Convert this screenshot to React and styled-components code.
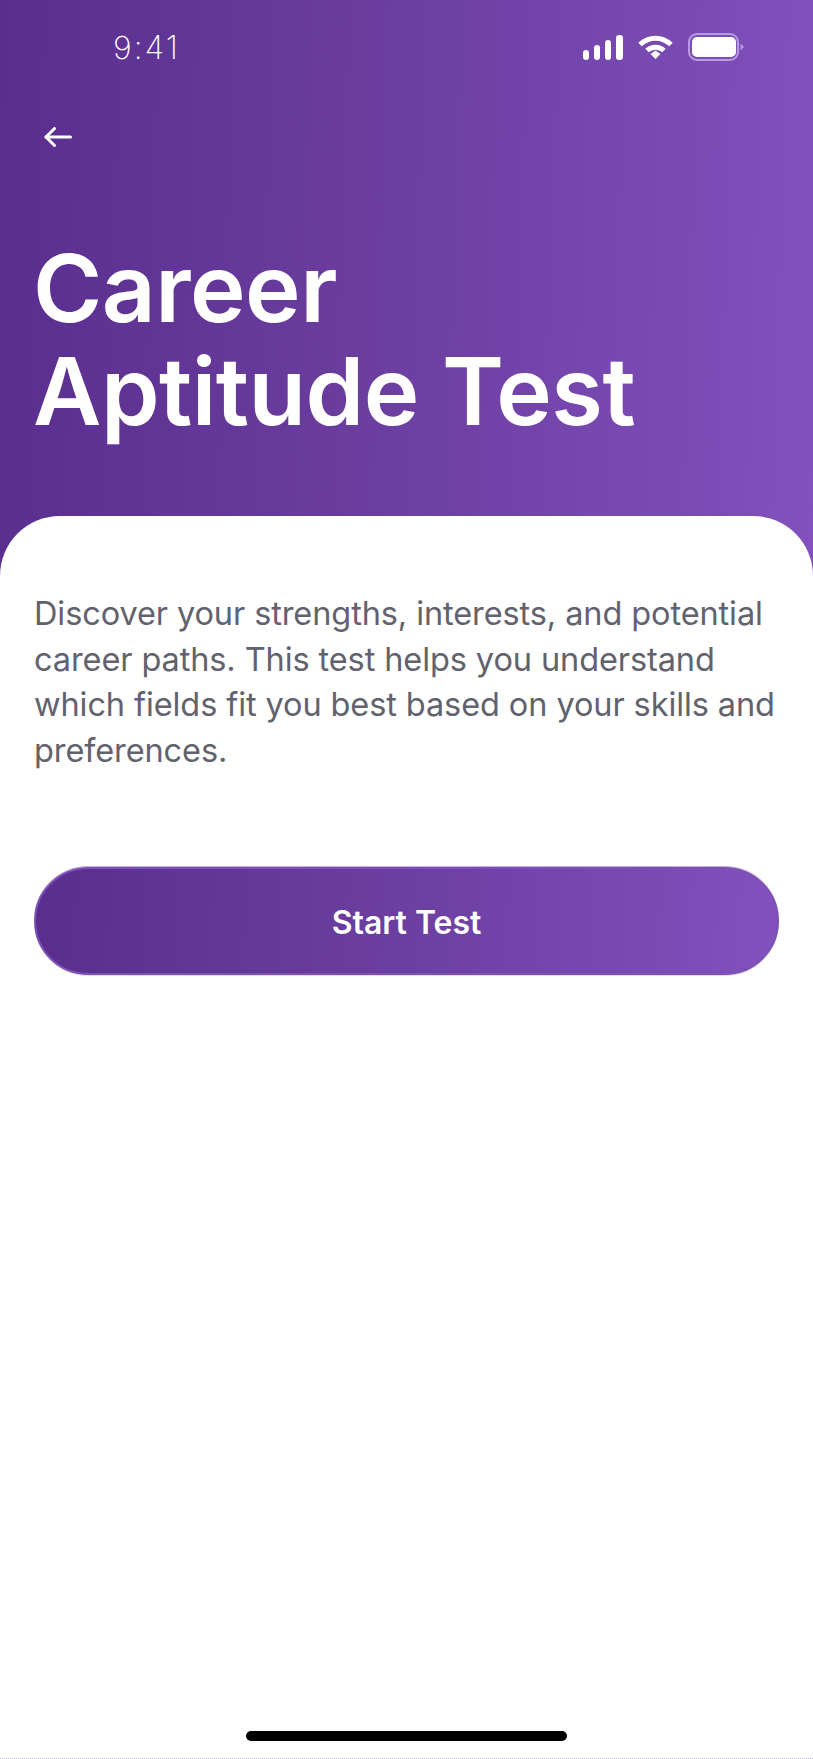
import styled, { createGlobalStyle } from "styled-components";

const GlobalStyle = createGlobalStyle`
    html, body {
        margin: 0;
        padding: 0;
        background: #fff;
    }
    * {
        box-sizing: border-box;
    }
`;

const purple = "linear-gradient(92deg, #5a2e8e 0%, #6a3d9f 45%, #8251bd 100%)";

function SignalIcon() {
    return (
        <svg width="40" height="25" viewBox="0 0 40 25" fill="#fff">
            <rect x="0" y="15" width="6" height="10" rx="3" />
            <rect x="11" y="10" width="6" height="15" rx="3" />
            <rect x="22" y="5" width="6" height="20" rx="3" />
            <rect x="33" y="0" width="7" height="25" rx="3" />
        </svg>
    );
}

function WifiIcon() {
    return (
        <svg width="35" height="24" viewBox="0 0 35 24" fill="none" stroke="#fff" strokeWidth="5">
            <path d="M2 9.5C11 1 24 1 33 9.5" />
            <path d="M9 15.5C14 11 21 11 26 15.5" />
            <path d="M12.5 19L17.5 15.5L22.5 19L17.5 24Z" fill="#fff" stroke="none" />
        </svg>
    );
}

function BatteryIcon() {
    return (
        <svg width="56" height="28" viewBox="0 0 56 28" fill="none">
            <rect x="1" y="1" width="49" height="26" rx="8" stroke="#b79be0" strokeWidth="2" />
            <rect x="4" y="4" width="44" height="20" rx="5" fill="#fff" />
            <path d="M52.500 10.500L56 14L52.500 17.500Z" fill="#b79be0" />
        </svg>
    );
}

function BackIcon() {
    return (
        <svg width="28" height="20" viewBox="0 0 28 20" fill="none" stroke="#fff" strokeWidth="3" strokeLinecap="round" strokeLinejoin="round">
            <path d="M2 10H26.500" />
            <path d="M10.500 1.500L2 10L10.500 18.500" />
        </svg>
    );
}

export default function App() {
    return (
        <Page>
            <GlobalStyle />
            <Hero>
                <StatusBar>
                    <Clock>9:41</Clock>
                    <StatusIcons>
                        <SignalIcon />
                        <WifiIcon />
                        <BatteryIcon />
                    </StatusIcons>
                </StatusBar>
                <BackButton aria-label="Back">
                    <BackIcon />
                </BackButton>
                <Title>
                    Career
                    <br />
                    Aptitude Test
                </Title>
            </Hero>
            <Card>
                <Description>
                    Discover your strengths, interests, and potential career paths. This test helps you
                    understand which fields fit you best based on your skills and preferences.
                </Description>
                <StartButton>Start Test</StartButton>
            </Card>
            <HomeBar />
        </Page>
    );
}

const Page = styled.div`
    display: flex;
    flex-direction: column;
    width: 100%;
    height: 1759px;
    overflow: hidden;
    background: #fff;
    border-bottom: 1px dotted #c9bde0;
    font-family: Inter, "Open Sans", sans-serif;
`;

const Hero = styled.header`
    height: 590px;
    flex-shrink: 0;
    padding: 32px 69px 0 34px;
    background: ${purple};
    color: #fff;
`;

const StatusBar = styled.div`
    display: flex;
    align-items: center;
    justify-content: space-between;
    height: 30px;
    padding-left: 79px;
`;

const Clock = styled.span`
    margin-top: 2px;
    font-family: Inter, sans-serif;
    font-size: 32px;
    font-weight: 200;
    line-height: 30px;
    letter-spacing: 2px;
`;

const StatusIcons = styled.div`
    display: flex;
    align-items: center;
    gap: 15px;
`;

const BackButton = styled.button`
    display: block;
    margin: 65px 0 0 10px;
    padding: 0;
    height: 20px;
    border: none;
    background: none;
`;

const Title = styled.h1`
    margin: 90px 0 0 -1px;
    font-size: 94px;
    font-weight: 600;
    line-height: 103px;
    letter-spacing: -0.5px;
    white-space: nowrap;
`;

const Card = styled.main`
    display: flex;
    flex-direction: column;
    margin-top: -74px;
    padding: 75px 34px 0;
    background: #fff;
    border-radius: 60px 60px 0 0;
    position: relative;
`;

const Description = styled.p`
    margin: 0;
    color: #62626f;
    font-size: 32.500px;
    line-height: 45.500px;
    letter-spacing: -0.1px;
`;

const StartButton = styled.button`
    height: 108px;
    margin-top: 94px;
    padding-top: 3px;
    border: 2px solid #7d50b6;
    border-radius: 54px;
    background: ${purple};
    box-shadow: 0 1px 0 #e3d9ef, 0 -1px 0 #c3b0dc;
    color: #fff;
    font-family: inherit;
    font-size: 32px;
    font-weight: 600;
`;

const HomeBar = styled.div`
    width: 321px;
    height: 10px;
    margin: auto auto 17px;
    border-radius: 5px;
    background: #000;
`;
